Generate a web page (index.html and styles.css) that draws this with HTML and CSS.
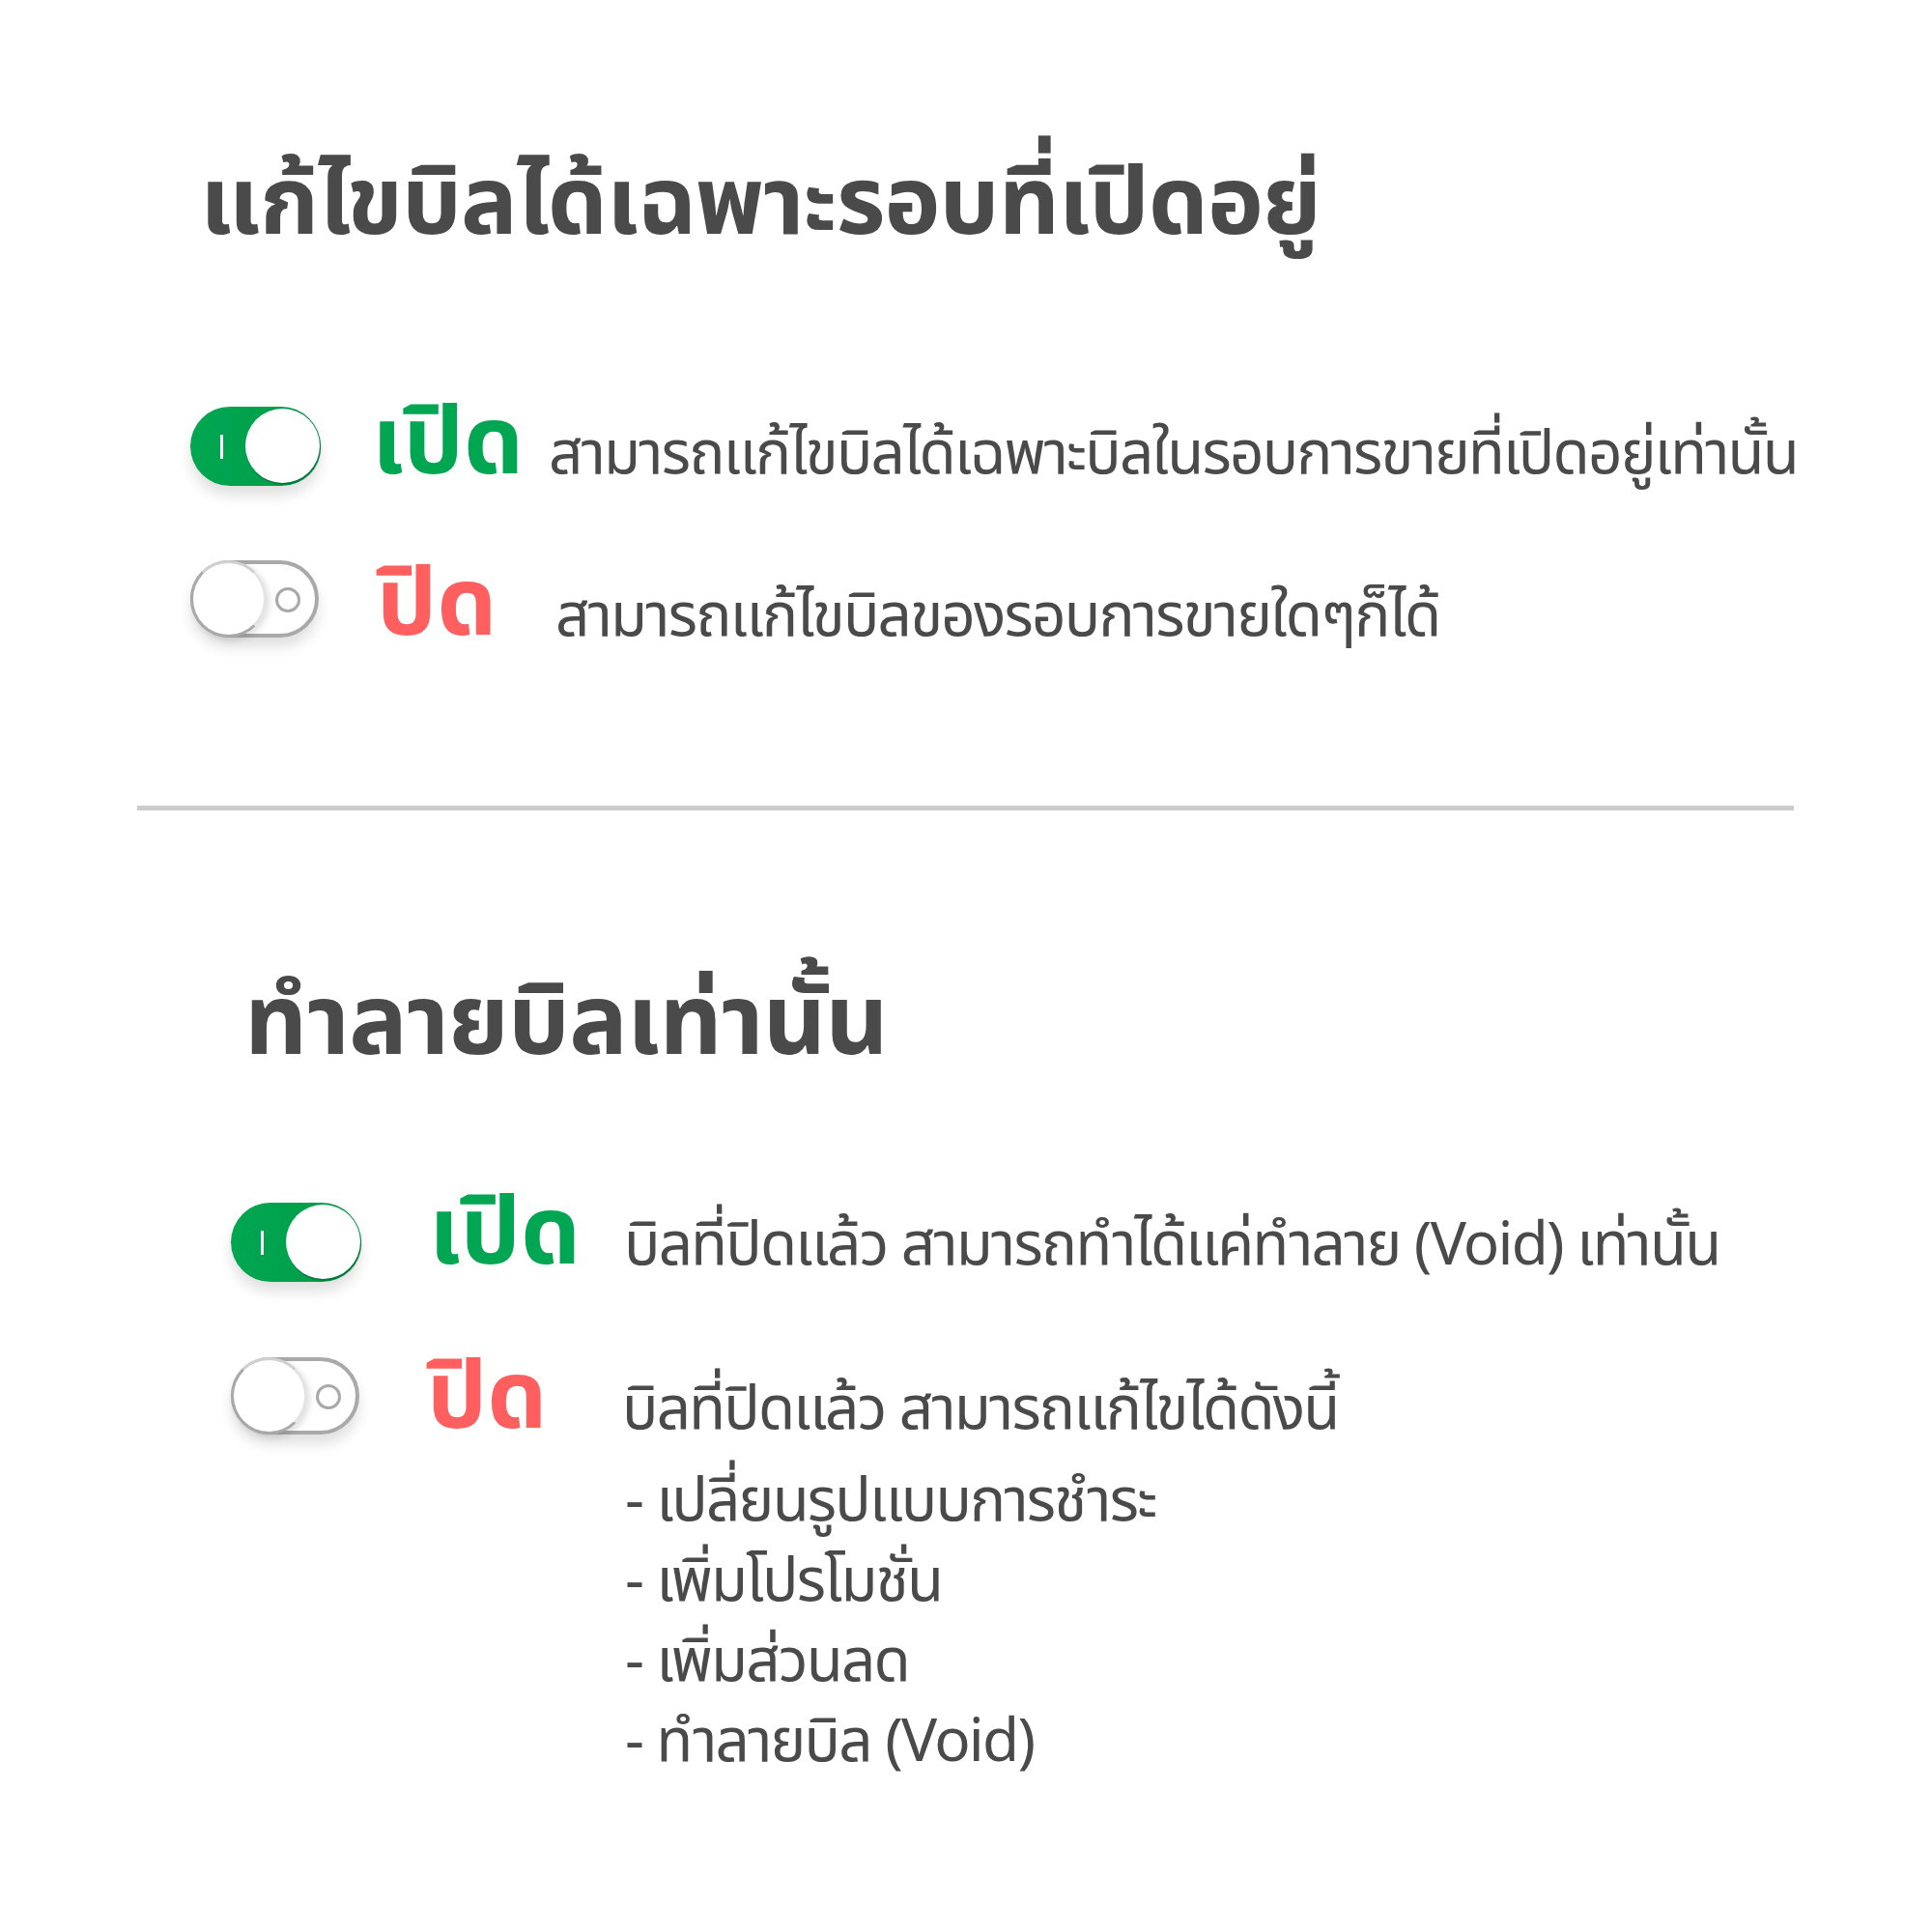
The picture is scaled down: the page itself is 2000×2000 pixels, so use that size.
FILE: index.html
```html
<!DOCTYPE html>
<html lang="th">
<head>
<meta charset="utf-8">
<link rel="stylesheet" href="styles.css">
</head>
<body>
<div class="page">
  <section class="section s1">
    <h1 class="title">แก้ไขบิลได้เฉพาะรอบที่เปิดอยู่</h1>
    <div class="rows">
      <div class="row row-on">
        <div class="toggle on"><span class="mark"></span><span class="knob"></span></div>
        <div class="label open">เปิด</div>
        <div class="desc">สามารถแก้ไขบิลได้เฉพาะบิลในรอบการขายที่เปิดอยู่เท่านั้น</div>
      </div>
      <div class="row row-off">
        <div class="toggle off"><span class="knob"></span><span class="dot"></span></div>
        <div class="label closed">ปิด</div>
        <div class="desc">สามารถแก้ไขบิลของรอบการขายใดๆก็ได้</div>
      </div>
    </div>
  </section>
  <hr class="divider">
  <section class="section s2">
    <h1 class="title">ทำลายบิลเท่านั้น</h1>
    <div class="rows">
      <div class="row row-on">
        <div class="toggle on"><span class="mark"></span><span class="knob"></span></div>
        <div class="label open">เปิด</div>
        <div class="desc">บิลที่ปิดแล้ว สามารถทำได้แค่ทำลาย (Void) เท่านั้น</div>
      </div>
      <div class="row row-off">
        <div class="toggle off"><span class="knob"></span><span class="dot"></span></div>
        <div class="label closed">ปิด</div>
        <div class="desc">
          <div>บิลที่ปิดแล้ว สามารถแก้ไขได้ดังนี้</div>
          <ul class="list">
            <li>- เปลี่ยนรูปแบบการชำระ</li>
            <li>- เพิ่มโปรโมชั่น</li>
            <li>- เพิ่มส่วนลด</li>
            <li>- ทำลายบิล (Void)</li>
          </ul>
        </div>
      </div>
    </div>
  </section>
</div>
</body>
</html>
```

FILE: styles.css
```css
* { box-sizing: border-box; }
html, body { margin: 0; padding: 0; background: #fff; }
body {
  width: 2000px;
  height: 2000px;
  font-family: "Noto Sans Thai", "Noto Sans Thai UI", "Noto Sans", "Open Sans", sans-serif;
  color: #4a4a4a;
}
.page { padding-top: 142px; }
.title {
  margin: 0;
  font-size: 98px;
  font-weight: 700;
  line-height: 140px;
  letter-spacing: -1px;
  white-space: nowrap;
  color: #4a4a4a;
}
.s1 { padding-left: 197px; }
.s1 .title { margin-left: 10px; }
.s1 .rows { margin-top: 139px; gap: 77px; }
.s2 { padding-left: 239px; margin-top: 151px; }
.s2 .title { margin-left: 14px; font-size: 101px; letter-spacing: -0.8px; }
.s2 .rows { margin-top: 115px; gap: 78px; }

.rows { display: flex; flex-direction: column; }
.row {
  display: flex;
  align-items: flex-start;
  height: 82px;
}
.label {
  flex: none;
  font-size: 98px;
  font-weight: 700;
  line-height: 94px;
  white-space: nowrap;
}
.s1 .label { margin-left: 53px; width: 183px; }
.s1 .row-off .label { margin-left: 60px; width: 185px; }
.s2 .label { margin-left: 70px; width: 202px; }
.open { color: #00a651; }
.closed { color: #ff5f5f; }
.desc {
  font-size: 62px;
  line-height: 83px;
  letter-spacing: -1.8px;
  white-space: nowrap;
}

.s1 .row-on .label { margin-top: -8px; }
.s1 .row-on .desc { margin-top: 9px; }
.s1 .row-off .label { margin-top: 0px; }
.s1 .row-off .desc { margin-top: 18px; }
.s2 .row-on .label { margin-top: -14px; }
.s2 .row-on .desc { margin-top: 4px; }
.s2 .row-off .label { margin-top: -4px; }
.s2 .row-off .desc { margin-top: 14px; }

.toggle {
  position: relative;
  flex: none;
  width: 135px;
  height: 82px;
  border-radius: 41px;
  box-shadow: 0 10px 14px rgba(0, 0, 0, 0.12);
}
.toggle.on {
  background: linear-gradient(90deg, #00a651 0%, #00a04c 60%, #008e40 100%);
}
.toggle.on .knob {
  position: absolute;
  right: 1px;
  top: 2px;
  width: 77px;
  height: 77px;
  border-radius: 50%;
  background: #fff;
  box-shadow: 1px 2px 1px #00793a;
}
.toggle .mark {
  position: absolute;
  left: 31px;
  top: 29px;
  width: 3px;
  height: 25px;
  background: #fff;
}
.toggle.off {
  background: #fff;
  border: 4px solid #a9a9a9;
  height: 80px;
  width: 133px;
}
.toggle.off .knob {
  position: absolute;
  left: -4px;
  top: -4px;
  width: 79px;
  height: 80px;
  border-radius: 50%;
  background: #fff;
  border: 3px solid #a9a9a9;
  border-right-color: #e4e4e4;
  border-top-color: #d0d0d0;
  box-shadow: 3px 3px 6px rgba(0, 0, 0, 0.12);
}
.toggle.off .dot {
  position: absolute;
  left: 84px;
  top: 24px;
  width: 26px;
  height: 26px;
  border-radius: 50%;
  border: 3px solid #a9a9a9;
}

.divider {
  margin: 172px 0 0 142px;
  width: 1715px;
  height: 5px;
  border: 0;
  background: #cccccc;
}
.list { list-style: none; margin: 12px 0 0; padding: 0 0 0 3px; }
.list li { height: 83px; }
```
